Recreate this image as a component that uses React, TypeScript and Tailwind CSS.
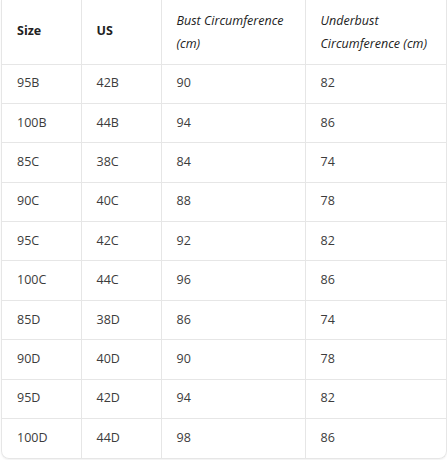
import React from "react";

// Bra size chart rows
const rows: [string, string, number, number][] = [
  ["95B", "42B", 90, 82],
  ["100B", "44B", 94, 86],
  ["85C", "38C", 84, 74],
  ["90C", "40C", 88, 78],
  ["95C", "42C", 92, 82],
  ["100C", "44C", 96, 86],
  ["85D", "38D", 86, 74],
  ["90D", "40D", 90, 78],
  ["95D", "42D", 94, 82],
  ["100D", "44D", 98, 86],
];

const App: React.FC = () => {
  return (
    <div className="w-[447px] h-[460px] bg-white overflow-hidden font-['Open_Sans',sans-serif] text-[12.5px] text-[#3c3c3c]">
      <div className="w-[446px] ml-px border-x border-b border-[#e6e6e6] rounded-b-lg overflow-hidden shadow-[0_1px_2px_rgba(0,0,0,0.06)]">
        <table className="w-full border-collapse table-fixed">
          <colgroup>
            <col className="w-[79px]" />
            <col className="w-[80px]" />
            <col className="w-[144px]" />
            <col />
          </colgroup>
          <thead>
            <tr className="h-[64px]">
              <th className="pl-[15px] pr-2 text-left align-middle font-bold text-[#222]">Size</th>
              <th className="pl-[15px] pr-2 text-left align-middle font-bold text-[#222] border-l border-[#e6e6e6]">US</th>
              <th className="pl-[15px] pr-2 text-left align-middle font-normal italic leading-[23px] text-[#222] border-l border-[#e6e6e6]">
                Bust Circumference (cm)
              </th>
              <th className="pl-[15px] pr-2 text-left align-middle font-normal italic leading-[23px] text-[#222] border-l border-[#e6e6e6]">
                Underbust Circumference (cm)
              </th>
            </tr>
          </thead>
          <tbody>
            {rows.map(([size, us, bust, under]) => (
              <tr key={size} className="h-[39.4px] border-t border-[#e6e6e6]">
                <td className="pl-[15px] align-middle">{size}</td>
                <td className="pl-[15px] align-middle border-l border-[#e6e6e6]">{us}</td>
                <td className="pl-[15px] align-middle border-l border-[#e6e6e6]">{bust}</td>
                <td className="pl-[15px] align-middle border-l border-[#e6e6e6]">{under}</td>
              </tr>
            ))}
          </tbody>
        </table>
      </div>
    </div>
  );
};

export default App;
